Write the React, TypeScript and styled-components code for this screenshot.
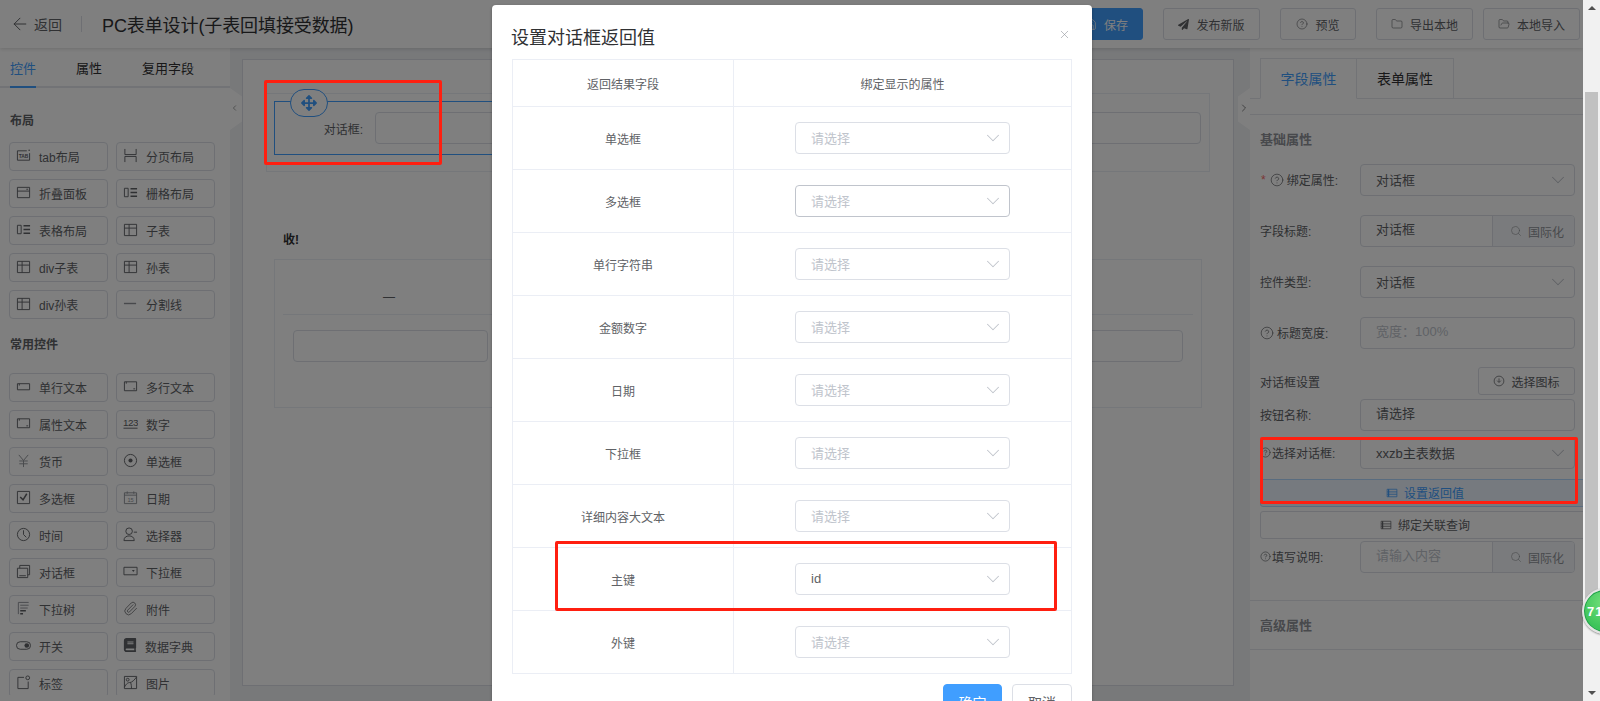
import React from 'react';
import styled, { createGlobalStyle } from 'styled-components';
import {
  ArrowLeft,
  ChevronDown,
  ChevronLeft,
  ChevronRight,
  CircleHelp,
  Folder,
  FolderOpen,
  Paperclip,
  Save,
  Search,
  X,
} from 'lucide-react';
import { FaArrowsAlt, FaBook, FaPaperPlane } from 'react-icons/fa';

const GlobalStyle = createGlobalStyle`
  html, body {
    margin: 0;
    height: 100%;
    overflow: hidden;
    background: #fff;
    font-family: "Liberation Sans", "Noto Sans CJK SC", sans-serif;
    color: #606266;
  }
  * { box-sizing: border-box; }
`;

const Root = styled.div`
  position: relative;
  display: flex;
  width: 1600px;
  height: 701px;
  overflow: hidden;
`;

const Page = styled.div`
  position: relative;
  display: flex;
  flex-direction: column;
  width: 1583px;
  height: 701px;
  overflow: hidden;
  background: #f0f2f5;
`;

const Header = styled.header`
  display: flex;
  align-items: center;
  justify-content: space-between;
  flex: none;
  height: 48px;
  padding: 0 3px 0 10px;
  background: #fff;
  box-shadow: 0 1px 4px rgba(0, 0, 0, 0.15);
  position: relative;
  z-index: 1;
`;

const HeaderLeft = styled.div`
  display: flex;
  align-items: center;
`;

const BackLink = styled.span`
  display: flex;
  align-items: center;
  gap: 4px;
  font-size: 14px;
  color: #606266;
`;

const HeaderDivider = styled.span`
  width: 1px;
  height: 16px;
  margin: 0 20px 0 19px;
  background: #dcdfe6;
`;

const PageTitle = styled.h1`
  margin: 0;
  font-size: 18px;
  font-weight: 400;
  letter-spacing: -0.1px;
  color: #303133;
`;

const HeaderActions = styled.div`
  display: flex;
  align-items: center;
`;

const HeaderButton = styled.button<{ $width: number; $gap: number; $primary?: boolean }>`
  display: flex;
  align-items: center;
  justify-content: center;
  gap: 7px;
  width: ${(p) => p.$width}px;
  height: 32px;
  margin-left: ${(p) => p.$gap}px;
  padding: 0;
  font: inherit;
  font-size: 12px;
  color: ${(p) => (p.$primary ? '#fff' : '#606266')};
  background: ${(p) => (p.$primary ? '#409eff' : '#fff')};
  border: 1px solid ${(p) => (p.$primary ? '#409eff' : '#dcdfe6')};
  border-radius: 3px;
`;

const Body = styled.div`
  display: flex;
  flex: 1;
  min-height: 0;
`;

const Sidebar = styled.aside`
  position: relative;
  flex: none;
  width: 230px;
  height: 653px;
  background: #fff;
`;

const SideTabs = styled.div`
  display: flex;
  gap: 40px;
  height: 40px;
  padding: 0 10px;
  border-bottom: 2px solid #e4e7ed;
`;

const SideTab = styled.span<{ $active?: boolean }>`
  height: 40px;
  font-size: 13px;
  line-height: 41px;
  color: ${(p) => (p.$active ? '#409eff' : '#303133')};
  border-bottom: 2px solid ${(p) => (p.$active ? '#409eff' : 'transparent')};
`;

const SideScroll = styled.div`
  height: 607px;
  padding: 0 9px;
  overflow: hidden;
`;

const GroupTitle = styled.div<{ $top: number; $bottom: number }>`
  margin: ${(p) => p.$top}px 0 ${(p) => p.$bottom}px 1px;
  height: 18px;
  font-size: 12px;
  font-weight: 700;
  line-height: 18px;
  color: #606266;
`;

const WidgetGrid = styled.div`
  display: grid;
  grid-template-columns: 99px 99px;
  gap: 8px;
`;

const WidgetButton = styled.div`
  display: flex;
  align-items: center;
  gap: 8px;
  height: 29px;
  padding-left: 6px;
  font-size: 12px;
  color: #606266;
  background: #fff;
  border: 1px solid #dcdfe6;
  border-radius: 4px;

  svg {
    flex: none;
    margin-top: -3px;
    color: #606266;
  }
`;

const Canvas = styled.main`
  position: relative;
  flex: 1;
  min-width: 0;
  padding: 11px 16px 15px 12px;
`;

const Sheet = styled.div`
  height: 100%;
  padding: 33px 23px 0;
  background: #fff;
  border: 1px solid #dcdfe6;
`;

const FormBox = styled.div`
  position: relative;
  display: flex;
  align-items: center;
  height: 79px;
  padding: 0 8px 9px 0;
  border: 1px solid #ebeef5;
`;

const FormLabel = styled.label`
  flex: none;
  width: 96px;
  margin-right: 12px;
  font-size: 12px;
  text-align: right;
  color: #606266;
`;

const CanvasInput = styled.div`
  flex: 1;
  height: 32px;
  background: #fff;
  border: 1px solid #dcdfe6;
  border-radius: 4px;
`;

const SelectedOutline = styled.div`
  position: absolute;
  left: 7px;
  top: 7px;
  width: 760px;
  height: 54px;
  border: 1px solid #409eff;
  pointer-events: none;
`;

const MoveHandle = styled.div`
  position: absolute;
  left: 23px;
  top: -5px;
  display: flex;
  align-items: center;
  justify-content: center;
  width: 38px;
  height: 28px;
  color: #409eff;
  background: #fff;
  border: 1px solid #409eff;
  border-radius: 14px;
`;

const SubTitle = styled.div`
  margin: 59px 0 0 17px;
  height: 18px;
  font-size: 12px;
  font-weight: 700;
  line-height: 18px;
  color: #303133;
`;

const SubTable = styled.div`
  height: 149px;
  margin: 10px 8px 0;
  padding: 0 8px;
  background: #fff;
  border: 1px solid #ebeef5;
`;

const SubHead = styled.div`
  display: grid;
  grid-template-columns: 212px 1fr;
  height: 55px;
  font-size: 12px;
  line-height: 74px;
  text-align: center;
  border-bottom: 1px solid #ebeef5;
`;

const SubRow = styled.div`
  display: grid;
  grid-template-columns: 195px 1fr;
  gap: 7px;
  padding: 15px 10px 0;

  & > div {
    flex: none;
  }
`;

const SideToggle = styled.div<{ $side: 'left' | 'right' }>`
  position: absolute;
  top: 40px;
  ${(p) => (p.$side === 'left' ? 'left: 0; padding-right: 3px;' : 'right: 0;')}
  display: flex;
  align-items: center;
  justify-content: center;
  width: 12px;
  height: 42px;
  padding-bottom: 2px;
  color: #303133;
  background: #fff;
  clip-path: ${(p) =>
    p.$side === 'left'
      ? 'polygon(0 0, 100% 20%, 100% 80%, 0 100%)'
      : 'polygon(100% 0, 0 20%, 0 80%, 100% 100%)'};
`;

const Inspector = styled.aside`
  flex: none;
  width: 333px;
  height: 653px;
  overflow: hidden;
  background: #fff;
`;

const InspectorTabs = styled.div`
  display: flex;
  height: 51px;
  padding: 10px 0 0 10px;
  border-bottom: 1px solid #e4e7ed;
`;

const InspectorTab = styled.div<{ $active?: boolean }>`
  width: 97px;
  height: 41px;
  font-size: 14px;
  line-height: 40px;
  text-align: center;
  color: ${(p) => (p.$active ? '#409eff' : '#303133')};
  background: #fff;
  border: 1px solid #e4e7ed;
  border-left-width: ${(p) => (p.$active ? '1px' : '0')};
  border-bottom-color: ${(p) => (p.$active ? '#fff' : '#e4e7ed')};
`;

const InspectorBody = styled.div`
  height: 16px;
  border-bottom: 1px solid #e4e7ed;
`;

const Section = styled.div`
  padding: 0 8px 0 10px;
`;

const SectionTitle = styled.div`
  height: 49px;
  font-size: 13px;
  font-weight: 700;
  line-height: 50px;
  color: #909399;
`;

const FieldRow = styled.div<{ $top: number }>`
  display: flex;
  align-items: center;
  height: 32px;
  margin-top: ${(p) => p.$top}px;
`;

const FieldLabel = styled.div<{ $tight?: boolean }>`
  display: flex;
  align-items: center;
  gap: ${(p) => (p.$tight ? 1 : 3)}px;
  flex: none;
  width: 100px;
  padding-bottom: 1px;
  font-size: 12px;
  color: #606266;
  white-space: nowrap;
`;

const Star = styled.span`
  margin: 0 1px 0 1px;
  color: #f56c6c;
`;

const SelectBox = styled.div<{ $muted?: boolean; $dark?: boolean; $w?: number }>`
  display: flex;
  align-items: center;
  justify-content: space-between;
  flex: ${(p) => (p.$w ? 'none' : '1')};
  width: ${(p) => (p.$w ? `${p.$w}px` : 'auto')};
  height: 32px;
  padding: 0 5px 2px 15px;
  font-size: 13px;
  color: ${(p) => (p.$muted ? '#c0c4cc' : '#606266')};
  background: #fff;
  border: 1px solid ${(p) => (p.$dark ? '#c0c4cc' : '#dcdfe6')};
  border-radius: 4px;

  svg {
    flex: none;
    color: #c0c4cc;
    margin-top: 2px;
  }
`;

const InputGroup = styled.div`
  display: flex;
  flex: 1;
  height: 32px;
  font-size: 13px;
  border: 1px solid #dcdfe6;
  border-radius: 4px;
  overflow: hidden;
`;

const GroupInput = styled.div<{ $muted?: boolean }>`
  flex: 1;
  padding-left: 15px;
  line-height: 28px;
  color: ${(p) => (p.$muted ? '#c0c4cc' : '#606266')};
`;

const GroupAppend = styled.div`
  display: flex;
  align-items: center;
  gap: 6px;
  width: 82px;
  padding-left: 17px;
  font-size: 12px;
  color: #909399;
  background: #f5f7fa;
  border-left: 1px solid #dcdfe6;
`;

const SettingHead = styled.div`
  display: flex;
  align-items: center;
  justify-content: space-between;
  height: 28px;
  margin-top: 18px;
  font-size: 12px;
  color: #606266;
`;

const PlainButton = styled.div`
  display: flex;
  align-items: center;
  justify-content: center;
  gap: 6px;
  width: 97px;
  height: 28px;
  font-size: 12px;
  color: #606266;
  border: 1px solid #dcdfe6;
  border-radius: 3px;
`;

const WideButton = styled.div<{ $top: number; $tint?: boolean }>`
  display: flex;
  align-items: center;
  justify-content: center;
  gap: 6px;
  width: 330px;
  height: 28px;
  margin-top: ${(p) => p.$top}px;
  padding-bottom: 1px;
  font-size: 12px;
  color: ${(p) => (p.$tint ? '#409eff' : '#606266')};
  background: ${(p) => (p.$tint ? '#ecf5ff' : '#fff')};
  border: 1px solid ${(p) => (p.$tint ? '#b3d8ff' : '#dcdfe6')};
  border-radius: 3px;
`;

const AdvancedRow = styled.div`
  height: 50px;
  margin-top: 27px;
  padding-left: 10px;
  font-size: 13px;
  font-weight: 700;
  line-height: 49px;
  color: #909399;
  border-top: 1px solid #e4e7ed;
  border-bottom: 1px solid #e4e7ed;
`;

const Mask = styled.div`
  position: absolute;
  inset: 0;
  z-index: 5;
  background: rgba(0, 0, 0, 0.5);
`;

const Modal = styled.div`
  position: absolute;
  left: 492px;
  top: 5px;
  z-index: 6;
  width: 600px;
  height: 740px;
  padding: 0 20px;
  background: #fff;
  border-radius: 4px;
  box-shadow: 0 1px 3px rgba(0, 0, 0, 0.3);
`;

const ModalHead = styled.div`
  display: flex;
  align-items: center;
  justify-content: space-between;
  height: 54px;
  padding-top: 8px;
  padding-right: 1px;

  svg {
    color: #909399;
    margin-top: -4px;
  }
`;

const ModalTitle = styled.span`
  margin-left: -1px;
  font-size: 18px;
  color: #303133;
`;

const BindTable = styled.div`
  display: grid;
  grid-template-columns: 220px 1fr;
  border: 1px solid #ebeef5;
  border-bottom: 0;
`;

const BindCell = styled.div<{ $head?: boolean; $right?: boolean }>`
  display: flex;
  align-items: center;
  justify-content: ${(p) => (p.$right && !p.$head ? 'flex-start' : 'center')};
  height: ${(p) => (p.$head ? 47 : 63)}px;
  padding-left: ${(p) => (p.$right && !p.$head ? '61px' : '0')};
  font-size: 12px;
  color: #606266;
  border-bottom: 1px solid #ebeef5;
  border-left: ${(p) => (p.$right ? '1px solid #ebeef5' : '0')};
`;

const ModalFooter = styled.div`
  display: flex;
  justify-content: flex-end;
  gap: 10px;
  padding-top: 10px;
`;

const ModalButton = styled.button<{ $primary?: boolean }>`
  width: ${(p) => (p.$primary ? 59 : 60)}px;
  height: 36px;
  padding: 0;
  font: inherit;
  font-size: 14px;
  color: ${(p) => (p.$primary ? '#fff' : '#606266')};
  background: ${(p) => (p.$primary ? '#409eff' : '#fff')};
  border: 1px solid ${(p) => (p.$primary ? '#409eff' : '#dcdfe6')};
  border-radius: 4px;
`;

const RedMark = styled.div<{ $x: number; $y: number; $w: number; $h: number }>`
  position: absolute;
  left: ${(p) => p.$x}px;
  top: ${(p) => p.$y}px;
  z-index: 8;
  width: ${(p) => p.$w}px;
  height: ${(p) => p.$h}px;
  border: 3px solid #ff1f10;
  border-radius: 2px;
  pointer-events: none;
`;

const Scrollbar = styled.div`
  position: relative;
  flex: none;
  width: 17px;
  height: 701px;
  background: #f1f1f1;
`;

const ScrollThumb = styled.div`
  position: absolute;
  left: 2px;
  top: 92px;
  width: 13px;
  height: 520px;
  background: #c1c1c1;
`;

const ScrollArrow = styled.div<{ $down?: boolean }>`
  position: absolute;
  left: 5px;
  ${(p) => (p.$down ? 'bottom: 6px;' : 'top: 6px;')}
  width: 0;
  height: 0;
  border-left: 4px solid transparent;
  border-right: 4px solid transparent;
  ${(p) => (p.$down ? 'border-top: 4px solid #505050;' : 'border-bottom: 4px solid #505050;')}
`;

const FloatBall = styled.div`
  position: absolute;
  left: 1582px;
  top: 588px;
  z-index: 9;
  display: flex;
  align-items: center;
  padding-left: 3px;
  width: 46px;
  height: 46px;
  font-size: 13px;
  font-weight: 700;
  letter-spacing: 1px;
  color: #fff;
  background: radial-gradient(circle at 50% 30%, #74e07c, #3cc45a 70%);
  border: 2px solid #e4e4e4;
  border-radius: 50%;
  box-shadow: inset 0 0 0 1px #1e9e4a, 0 1px 2px rgba(0, 0, 0, 0.4);
`;

type IconProps = { name: string; size?: number };

const Glyph = ({ name, size = 15 }: IconProps) => {
  const line = { fill: 'none', stroke: 'currentColor', strokeWidth: 1 };
  const bar = { fill: 'none', stroke: 'currentColor', strokeWidth: 1.6 };
  const faint = { fill: 'none', stroke: '#909399', strokeWidth: 1 };
  const shapes: Record<string, React.ReactNode> = {
    tab: (
      <>
        <path d="M1.500 3h10M14.500 5.500V13h-13V3" {...line} />
        <circle cx="14" cy="2.500" r="0.800" fill="currentColor" />
        <text x="8" y="10.600" fontSize="5.200" fontWeight="700" fontFamily="Liberation Sans" textAnchor="middle" fill="currentColor">TAB</text>
      </>
    ),
    page: <path d="M2 1v6h12V1M2 15V9h12v6" {...line} />,
    fold: <path d="M1.500 2.500h13v11h-13zM1.500 6.500h13M11 4.500h2" {...line} />,
    grid: (
      <>
        <path d="M1.500 3.500h4v9h-4z" {...line} />
        <path d="M8 4h7M8 8h7M8 12h7" {...bar} />
      </>
    ),
    table: <path d="M1.500 2.500h13v12h-13zM1.500 6.500h13M6.500 2.500v12" {...line} />,
    line: <path d="M1 8h13" fill="none" stroke="#909399" strokeWidth="1.500" />,
    single: <path d="M1.500 5h13v6.500h-13zM3.500 5v2" {...line} />,
    multi: <path d="M1.500 3h13v9.500h-13zM3.500 3v2M11 10.500h2" {...line} />,
    yen: <path d="M3 2l5 6 5-6M8 8v7M3.500 8.500h9M3.500 11.500h9" {...faint} />,
    radio: (
      <>
        <circle cx="8" cy="8" r="6.500" {...line} />
        <circle cx="8" cy="8" r="2.200" fill="currentColor" />
      </>
    ),
    check: (
      <>
        <path d="M1.500 1.500h13v13h-13z" {...line} />
        <path d="M4.500 7.500l3 3 4-6.500" {...bar} />
      </>
    ),
    date: (
      <>
        <path d="M1.500 3h13v11.500h-13zM1.500 5.500h13M4.500 1.500v2.500M11.500 1.500v2.500" {...faint} />
        <text x="8" y="12.700" fontSize="6" fontFamily="Liberation Sans" textAnchor="middle" fill="#909399">15</text>
      </>
    ),
    clock: (
      <>
        <circle cx="8" cy="8" r="6.500" {...line} />
        <path d="M8 3.500V8l3 3" {...line} />
      </>
    ),
    user: (
      <>
        <circle cx="6.500" cy="4.500" r="3.500" {...line} />
        <path d="M1 14.500c0-3.500 2.500-5 5.500-5s5.500 1.500 5.500 5zM11.500 5.500H15" {...line} />
      </>
    ),
    dialog: <path d="M1.500 4.500h11v10h-11zM4 4.500v-3h10.500v10h-2M3.500 12.500h7" {...line} />,
    dropdown: (
      <>
        <path d="M1 3.500h14v8H1z" {...line} />
        <path d="M9.500 6.500h3l-1.500 2z" fill="currentColor" />
      </>
    ),
    tree: (
      <>
        <path d="M2.500 14V1.500h11M4.500 4.500h9M4.500 7.500h8" {...faint} />
        <path d="M4.500 10.500h6M4.500 13.500h3" {...bar} />
      </>
    ),
    toggle: (
      <>
        <rect x="0.500" y="4" width="15" height="8" rx="4" {...line} />
        <circle cx="11.500" cy="8" r="2.500" fill="currentColor" />
      </>
    ),
    tag: (
      <>
        <path d="M8.500 2.500H2v12h11V7" {...line} />
        <circle cx="12.500" cy="3" r="2" {...line} />
      </>
    ),
    image: (
      <>
        <path d="M1.500 1.500h13v13h-13zM1.500 13c2-4 4-5 6-5s5-3 7-6M8 8c1 2 1 4 1 6.500" {...line} />
        <circle cx="5" cy="5" r="1.500" {...line} />
      </>
    ),
    list: (
      <>
        <path d="M1.500 3h13v10h-13z" {...line} />
        <path d="M1.500 6.500h13M1.500 9.700h13" {...line} />
        <path d="M3.500 3v10" {...bar} />
      </>
    ),
    clockDown: (
      <>
        <circle cx="8" cy="8" r="6.500" {...line} />
        <path d="M8 4.500v5M5.500 7.500l2.500 2.500 2.500-2.500" {...line} />
      </>
    ),
  };
  if (name === 'clip') return <Paperclip size={15} strokeWidth={1.2} />;
  if (name === 'book') return <FaBook size={14} />;
  if (name === 'number') {
    return (
      <svg width={size} height={size} viewBox="0 0 16 16">
        <text x="8" y="10.500" fontSize="10.500" letterSpacing="-0.5" fontFamily="Liberation Sans" textAnchor="middle" fill="currentColor">123</text>
        <path d="M0.500 13h15" {...line} />
      </svg>
    );
  }
  return (
    <svg width={size} height={size} viewBox="0 0 16 16">
      {shapes[name]}
    </svg>
  );
};

const layoutWidgets = [
  ['tab', 'tab布局'],
  ['page', '分页布局'],
  ['fold', '折叠面板'],
  ['grid', '栅格布局'],
  ['grid', '表格布局'],
  ['table', '子表'],
  ['table', 'div子表'],
  ['table', '孙表'],
  ['table', 'div孙表'],
  ['line', '分割线'],
];

const commonWidgets = [
  ['single', '单行文本'],
  ['multi', '多行文本'],
  ['multi', '属性文本'],
  ['number', '数字'],
  ['yen', '货币'],
  ['radio', '单选框'],
  ['check', '多选框'],
  ['date', '日期'],
  ['clock', '时间'],
  ['user', '选择器'],
  ['dialog', '对话框'],
  ['dropdown', '下拉框'],
  ['tree', '下拉树'],
  ['clip', '附件'],
  ['toggle', '开关'],
  ['book', '数据字典'],
  ['tag', '标签'],
  ['image', '图片'],
];

const bindRows = [
  { field: '单选框' },
  { field: '多选框', dark: true },
  { field: '单行字符串' },
  { field: '金额数字' },
  { field: '日期' },
  { field: '下拉框' },
  { field: '详细内容大文本' },
  { field: '主键', value: 'id' },
  { field: '外键' },
];

const Chevron = () => <ChevronDown size={22} strokeWidth={1.1} />;

const I18nAppend = () => (
  <GroupAppend>
    <Search size={12} strokeWidth={1.2} />
    国际化
  </GroupAppend>
);

export default function App() {
  return (
    <Root>
      <GlobalStyle />
      <Page>
        <Header>
          <HeaderLeft>
            <BackLink>
              <ArrowLeft size={20} strokeWidth={1.2} />
              返回
            </BackLink>
            <HeaderDivider />
            <PageTitle>PC表单设计(子表回填接受数据)</PageTitle>
          </HeaderLeft>
          <HeaderActions>
            <HeaderButton $primary $width={74} $gap={0}>
              <Save size={13} strokeWidth={1.3} />
              保存
            </HeaderButton>
            <HeaderButton $width={97} $gap={20}>
              <FaPaperPlane size={11} />
              发布新版
            </HeaderButton>
            <HeaderButton $width={76} $gap={20}>
              <CircleHelp size={12} strokeWidth={1.2} />
              预览
            </HeaderButton>
            <HeaderButton $width={97} $gap={20}>
              <Folder size={12} strokeWidth={1.2} />
              导出本地
            </HeaderButton>
            <HeaderButton $width={97} $gap={10}>
              <FolderOpen size={12} strokeWidth={1.2} />
              本地导入
            </HeaderButton>
          </HeaderActions>
        </Header>
        <Body>
          <Sidebar>
            <SideTabs>
              <SideTab $active>控件</SideTab>
              <SideTab>属性</SideTab>
              <SideTab>复用字段</SideTab>
            </SideTabs>
            <SideScroll>
              <GroupTitle $top={24} $bottom={12}>布局</GroupTitle>
              <WidgetGrid>
                {layoutWidgets.map(([icon, label]) => (
                  <WidgetButton key={label}>
                    <Glyph name={icon} />
                    {label}
                  </WidgetButton>
                ))}
              </WidgetGrid>
              <GroupTitle $top={17} $bottom={19}>常用控件</GroupTitle>
              <WidgetGrid>
                {commonWidgets.map(([icon, label]) => (
                  <WidgetButton key={label}>
                    <Glyph name={icon} />
                    {label}
                  </WidgetButton>
                ))}
              </WidgetGrid>
            </SideScroll>
          </Sidebar>
          <Canvas>
            <SideToggle $side="left">
              <ChevronLeft size={14} strokeWidth={1.2} />
            </SideToggle>
            <Sheet>
              <FormBox>
                <FormLabel>对话框:</FormLabel>
                <CanvasInput />
                <SelectedOutline />
                <MoveHandle>
                  <FaArrowsAlt size={16} />
                </MoveHandle>
              </FormBox>
              <SubTitle>收!</SubTitle>
              <SubTable>
                <SubHead>
                  <span>—</span>
                  <span />
                </SubHead>
                <SubRow>
                  <CanvasInput />
                  <CanvasInput />
                </SubRow>
              </SubTable>
            </Sheet>
            <SideToggle $side="right">
              <ChevronRight size={14} strokeWidth={1.2} />
            </SideToggle>
          </Canvas>
          <Inspector>
            <InspectorTabs>
              <InspectorTab $active>字段属性</InspectorTab>
              <InspectorTab>表单属性</InspectorTab>
            </InspectorTabs>
            <InspectorBody />
            <Section>
              <SectionTitle>基础属性</SectionTitle>
              <FieldRow $top={0}>
                <FieldLabel>
                  <Star>*</Star>
                  <CircleHelp size={14} strokeWidth={1.2} />
                  绑定属性:
                </FieldLabel>
                <SelectBox>
                  对话框
                  <Chevron />
                </SelectBox>
              </FieldRow>
              <FieldRow $top={19}>
                <FieldLabel>字段标题:</FieldLabel>
                <InputGroup>
                  <GroupInput>对话框</GroupInput>
                  <I18nAppend />
                </InputGroup>
              </FieldRow>
              <FieldRow $top={19}>
                <FieldLabel>控件类型:</FieldLabel>
                <SelectBox>
                  对话框
                  <Chevron />
                </SelectBox>
              </FieldRow>
              <FieldRow $top={19}>
                <FieldLabel>
                  <CircleHelp size={14} strokeWidth={1.2} />
                  标题宽度:
                </FieldLabel>
                <InputGroup>
                  <GroupInput $muted>宽度：100%</GroupInput>
                </InputGroup>
              </FieldRow>
              <SettingHead>
                对话框设置
                <PlainButton>
                  <Glyph name="clockDown" size={12} />
                  选择图标
                </PlainButton>
              </SettingHead>
              <FieldRow $top={4}>
                <FieldLabel>按钮名称:</FieldLabel>
                <InputGroup>
                  <GroupInput>请选择</GroupInput>
                </InputGroup>
              </FieldRow>
              <FieldRow $top={6}>
                <FieldLabel $tight>
                  <CircleHelp size={11} strokeWidth={1.4} />
                  选择对话框:
                </FieldLabel>
                <SelectBox>
                  xxzb主表数据
                  <Chevron />
                </SelectBox>
              </FieldRow>
              <WideButton $tint $top={10}>
                <Glyph name="list" size={12} />
                设置返回值
              </WideButton>
              <WideButton $top={4}>
                <Glyph name="list" size={12} />
                绑定关联查询
              </WideButton>
              <FieldRow $top={2}>
                <FieldLabel $tight>
                  <CircleHelp size={11} strokeWidth={1.4} />
                  填写说明:
                </FieldLabel>
                <InputGroup>
                  <GroupInput $muted>请输入内容</GroupInput>
                  <I18nAppend />
                </InputGroup>
              </FieldRow>
            </Section>
            <AdvancedRow>高级属性</AdvancedRow>
          </Inspector>
        </Body>
        <Mask />
        <Modal>
          <ModalHead>
            <ModalTitle>设置对话框返回值</ModalTitle>
            <X size={13} strokeWidth={1.1} />
          </ModalHead>
          <BindTable>
            <BindCell $head>返回结果字段</BindCell>
            <BindCell $head $right>绑定显示的属性</BindCell>
            {bindRows.map((row) => (
              <React.Fragment key={row.field}>
                <BindCell>{row.field}</BindCell>
                <BindCell $right>
                  <SelectBox $w={215} $muted={!row.value} $dark={row.dark}>
                    {row.value ?? '请选择'}
                    <Chevron />
                  </SelectBox>
                </BindCell>
              </React.Fragment>
            ))}
          </BindTable>
          <ModalFooter>
            <ModalButton $primary>确定</ModalButton>
            <ModalButton>取消</ModalButton>
          </ModalFooter>
        </Modal>
      </Page>
      <Scrollbar>
        <ScrollArrow />
        <ScrollThumb />
        <ScrollArrow $down />
      </Scrollbar>
      <FloatBall>71</FloatBall>
      <RedMark $x={264} $y={80} $w={178} $h={85} />
      <RedMark $x={555} $y={541} $w={502} $h={70} />
      <RedMark $x={1260} $y={437} $w={318} $h={67} />
    </Root>
  );
}
